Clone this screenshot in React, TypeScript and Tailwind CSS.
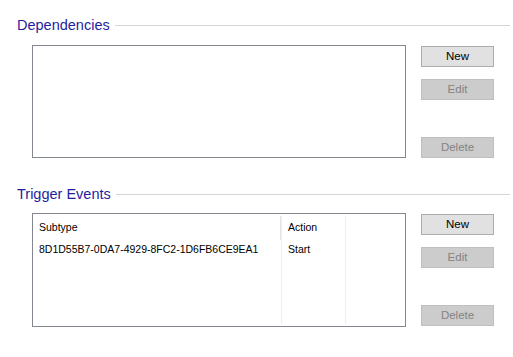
import React from "react";

const font = { fontFamily: '"Liberation Sans", Arial, sans-serif' };

const SideButton = ({ label, disabled, className = "" }: { label: string; disabled?: boolean; className?: string }) => (
  <button
    className={`h-[21px] w-[73px] border text-[11.5px] leading-none ${
      disabled ? "border-[#bfbfbf] bg-[#cccccc] text-[#838383]" : "border-[#adadad] bg-[#e1e1e1] text-black"
    } ${className}`}
  >
    {label}
  </button>
);

const GroupHeader = ({ title }: { title: string }) => (
  <div className="flex h-[16px] items-center pr-[3px]">
    <span className="text-[14.5px] leading-none text-[#1f1f9e]">{title}</span>
    <div className="ml-[5px] h-px flex-1 bg-[#d5d5d5]" />
  </div>
);

const Buttons = () => (
  <div className="flex flex-col pt-[1px]">
    <SideButton label="New" />
    <SideButton label="Edit" disabled className="mt-[12px]" />
    <SideButton label="Delete" disabled className="mt-[37px]" />
  </div>
);

export default function App() {
  return (
    <div className="h-[357px] w-[513px] overflow-hidden bg-white pl-[17px]" style={font}>
      {/* Dependencies */}
      <div className="mt-[17px]">
        <GroupHeader title="Dependencies" />
        <div className="mt-[12px] flex gap-[15px] pl-[15px]">
          <div className="h-[113px] w-[374px] border border-[#828790] bg-white" />
          <Buttons />
        </div>
      </div>

      {/* Trigger Events */}
      <div className="mt-[28px]">
        <GroupHeader title="Trigger Events" />
        <div className="mt-[11px] flex gap-[15px] pl-[15px]">
          <div className="flex h-[114px] w-[374px] border border-[#828790] bg-white py-[2px] text-[10.5px] text-black">
            <div className="flex w-[249px] flex-col border-r border-[#e8eff8]">
              <div className="flex h-[24px] items-center border-r border-[#e5e5e5] pl-[6px]">Subtype</div>
              <div className="flex h-[19px] items-center pl-[6px]">8D1D55B7-0DA7-4929-8FC2-1D6FB6CE9EA1</div>
            </div>
            <div className="flex w-[64px] flex-col border-r border-[#e8eff8]">
              <div className="flex h-[24px] items-center pl-[6px]">Action</div>
              <div className="flex h-[19px] items-center pl-[6px]">Start</div>
            </div>
            <div className="flex-1" />
          </div>
          <Buttons />
        </div>
      </div>
    </div>
  );
}
